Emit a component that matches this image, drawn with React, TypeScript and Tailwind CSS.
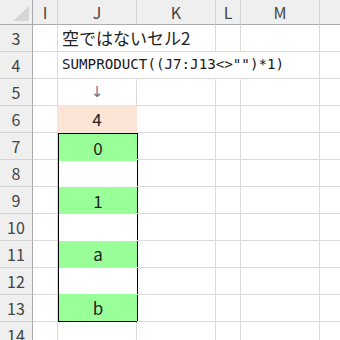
import React from "react";

const FONT = { fontFamily: '"Noto Sans CJK JP", "Noto Sans", sans-serif' };
const MONO = { fontFamily: '"DejaVu Sans Mono", "Liberation Mono", monospace' };
const ARROW = { fontFamily: '"DejaVu Sans", sans-serif' };

const colLetters = ["I", "J", "K", "L", "M", ""];
const rowNums = [3, 4, 5, 6, 7, 8, 9, 10, 11, 12, 13, 14];

function Corner() {
  return (
    <div className="relative bg-[#efefef] border-r border-b border-r-[#ababab] border-b-[#ababab]">
      <svg width="32" height="24" className="absolute left-0 top-0">
        <polygon points="29,6 29,21 13,21" fill="#d6d6d6" />
      </svg>
    </div>
  );
}

function ColHead({ label, last }: { label: string; last?: boolean }) {
  return (
    <div
      className={
        "bg-[#efefef] border-b border-b-[#ababab] flex items-center justify-center text-[16px] text-[#444] " +
        (last ? "" : "border-r border-r-[#d4d4d4]")
      }
    >
      {label}
    </div>
  );
}

function RowHead({ n }: { n: number }) {
  return (
    <div className="bg-[#efefef] border-r border-r-[#ababab] border-b border-b-[#d4d4d4] flex items-center justify-center text-[16px] text-[#444]">
      {n}
    </div>
  );
}

function Cell({ className = "", children }: { className?: string; children?: React.ReactNode }) {
  return (
    <div className={"border-r border-b border-[#dadada] flex items-center min-w-0 " + className}>
      {children}
    </div>
  );
}

export default function App() {
  const boxRows = ["0", "", "1", "", "a", "", "b"];

  return (
    <div className="w-[340px] h-[340px] overflow-hidden bg-white" style={FONT}>
      <div className="grid grid-cols-[33px_25px_79px_79px_25px_79px_1fr] grid-rows-[25px_repeat(12,27px)]">
        <Corner />
        {colLetters.map((c, i) => (
          <ColHead key={i} label={c} last={i === colLetters.length - 1} />
        ))}

        {/* row 3 */}
        <RowHead n={3} />
        <Cell />
        <Cell className="border-r-transparent overflow-visible">
          <span className="pl-[4px] whitespace-nowrap text-[17px] text-[#222]">空ではないセル2</span>
        </Cell>
        <Cell />
        <Cell />
        <Cell />
        <Cell className="border-r-0" />

        {/* row 4 */}
        <RowHead n={4} />
        <Cell />
        <Cell className="border-r-transparent overflow-visible">
          <span className="pl-[4px] whitespace-nowrap text-[14.2px] text-[#1a1a1a]" style={MONO}>
            SUMPRODUCT((J7:J13&lt;&gt;"")*1)
          </span>
        </Cell>
        <Cell className="border-r-transparent" />
        <Cell className="border-r-transparent" />
        <Cell />
        <Cell className="border-r-0" />

        {/* row 5 */}
        <RowHead n={5} />
        <Cell />
        <Cell className="justify-center border-b-[#fce4d6]">
          <span className="text-[15px] text-[#6e6e8c]" style={ARROW}>↓</span>
        </Cell>
        <Cell />
        <Cell />
        <Cell />
        <Cell className="border-r-0" />

        {/* row 6 */}
        <RowHead n={6} />
        <Cell className="border-r-[#fce4d6]" />
        <Cell className="justify-center bg-[#fce4d6] border-r-[#fce4d6] border-b-[#fce4d6]">
          <span className="text-[17px] text-[#222]">4</span>
        </Cell>
        <Cell />
        <Cell />
        <Cell />
        <Cell className="border-r-0" />

        {/* rows 7-14 */}
        {rowNums.slice(4).map((n, idx) => (
          <React.Fragment key={n}>
            <RowHead n={n} />
            <Cell />
            {idx === 0 && (
              <div className="row-span-7 col-start-3 border border-black flex flex-col w-[80px]">
                {boxRows.map((v, i) => (
                  <div
                    key={i}
                    className={
                      "flex-1 flex items-center justify-center text-[17px] text-[#222] " +
                      (v ? "bg-[#99ff99]" : "bg-white")
                    }
                  >
                    {v}
                  </div>
                ))}
              </div>
            )}
            {n === 14 && <Cell />}
            <Cell />
            <Cell />
            <Cell />
            <Cell className="border-r-0" />
          </React.Fragment>
        ))}
      </div>
    </div>
  );
}
